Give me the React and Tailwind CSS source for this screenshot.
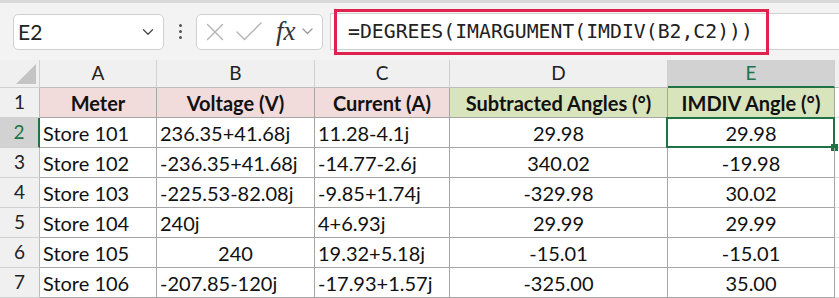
import { ChevronDown } from 'lucide-react'

const cols = ['A', 'B', 'C', 'D', 'E']
const widths = ['w-[117px]', 'w-[158px]', 'w-[135px]', 'w-[218px]', 'w-[167px]']

const rows = [
  ['Store 101', '236.35+41.68j', '11.28-4.1j', '29.98', '29.98'],
  ['Store 102', '-236.35+41.68j', '-14.77-2.6j', '340.02', '-19.98'],
  ['Store 103', '-225.53-82.08j', '-9.85+1.74j', '-329.98', '30.02'],
  ['Store 104', '240j', '4+6.93j', '29.99', '29.99'],
  ['Store 105', '240', '19.32+5.18j', '-15.01', '-15.01'],
  ['Store 106', '-207.85-120j', '-17.93+1.57j', '-325.00', '35.00'],
]

const headers = [
  ['Meter', 'bg-[#f2dcdb]'],
  ['Voltage (V)', 'bg-[#f2dcdb]'],
  ['Current (A)', 'bg-[#f2dcdb]'],
  ['Subtracted Angles (°)', 'bg-[#d8e4bc]'],
  ['IMDIV Angle (°)', 'bg-[#d8e4bc]'],
]

const cellFont = "font-['Lato',sans-serif] text-[20px] text-[#111]"

export default function App() {
  return (
    <div className="h-[298px] w-[839px] overflow-hidden bg-white">
      <FormulaBar />
      <div className="flex h-[28px] bg-[#f0f0f0] font-['Lato',sans-serif] text-[19px] text-[#222]">
        <div className="relative w-[40px] shrink-0 border-r border-b border-[#d0d0d0]">
          <svg className="absolute right-[3px] bottom-[3px]" width="20" height="20" viewBox="0 0 20 20">
            <polygon points="20,0 20,20 0,20" fill="#c4c4c4" />
          </svg>
        </div>
        {cols.map((c, i) => (
          <div
            key={c}
            className={`${widths[i]} flex shrink-0 items-center justify-center border-r border-[#d0d0d0] ${c === 'E' ? 'border-b-2 border-b-[#217346] bg-[#d2d2d2] text-[#217346]' : 'border-b border-b-[#bdbdbd]'}`}
          >
            {c}
          </div>
        ))}
        <div className="flex-1 border-b border-[#bdbdbd]" />
      </div>

      <div className="flex h-[30px]">
        <RowHead n={1} />
        {headers.map(([t, bg], i) => (
          <div key={t} className={`${widths[i]} ${bg} ${cellFont} flex shrink-0 items-center justify-center border-r border-b border-[#a6a6a6] font-bold`}>
            {t}
          </div>
        ))}
        <div className="flex-1 border-b border-[#e1e1e1]" />
      </div>

      {rows.map((r, ri) => (
        <div key={ri} className="flex h-[30px]">
          <RowHead n={ri + 2} active={ri === 0} />
          {r.map((v, ci) => {
            const center = ci >= 3 || v === '240'
            const selected = ri === 0 && ci === 4
            return (
              <div
                key={ci}
                className={`${widths[ci]} ${cellFont} relative flex shrink-0 items-center border-r border-b border-[#a6a6a6] ${center ? 'justify-center' : 'pl-[3px]'}`}
              >
                {v}
                {selected ? (
                  <>
                    <div className="absolute -top-[1px] -left-[2px] -right-[1px] -bottom-[1px] border-2 border-[#217346]" />
                    <div className="absolute -right-[4px] -bottom-[4px] h-[7px] w-[7px] bg-[#217346]" />
                  </>
                ) : null}
              </div>
            )
          })}
          <div className="flex-1 border-b border-[#e1e1e1]" />
        </div>
      ))}
    </div>
  )
}

function RowHead({ n, active }) {
  return (
    <div
      className={`flex w-[40px] shrink-0 items-center justify-center border-b border-[#d0d0d0] font-['Lato',sans-serif] text-[19px] ${active ? 'border-r-2 border-r-[#217346] bg-[#d2d2d2] text-[#217346]' : 'border-r border-r-[#bdbdbd] bg-[#f0f0f0] text-[#222]'}`}
    >
      {n}
    </div>
  )
}

function FormulaBar() {
  return (
    <div className="flex h-[60px] items-center border-t-[3px] border-[#d9d9d9] bg-[#f3f3f3] pl-[13px]">
      <div className="flex h-[36px] w-[151px] items-center justify-between rounded-[5px] border border-[#d0d0d0] bg-white pr-[6px] pl-[4px]">
        <span className="font-['Lato',sans-serif] text-[21px] text-[#222]">E2</span>
        <ChevronDown className="h-[18px] w-[18px] text-[#444]" strokeWidth={1.6} />
      </div>
      <div className="mr-[14px] ml-[15px] flex flex-col gap-[3px]">
        <span className="h-[3px] w-[3px] rounded-full bg-[#555]" />
        <span className="h-[3px] w-[3px] rounded-full bg-[#555]" />
        <span className="h-[3px] w-[3px] rounded-full bg-[#555]" />
      </div>
      <div className="flex h-[36px] w-[127px] items-center rounded-[5px] border border-[#d0d0d0] bg-white pl-[9px]">
        <svg width="18" height="18" viewBox="0 0 18 18" fill="none" stroke="#b3b3b3" strokeWidth="1.4" strokeLinecap="round">
          <path d="M1.5 1.5 16.5 16.5M16.5 1.5 1.5 16.5" />
        </svg>
        <svg className="ml-[12px]" width="26" height="19" viewBox="0 0 26 19" fill="none" stroke="#b3b3b3" strokeWidth="1.4" strokeLinecap="round" strokeLinejoin="round">
          <path d="M1 10 8.5 17.5 25 1" />
        </svg>
        <span className="ml-[14px] font-['Liberation_Serif',serif] text-[27px] leading-none italic text-[#333]">fx</span>
        <svg className="ml-[6px]" width="11" height="7" viewBox="0 0 11 7" fill="none" stroke="#999" strokeWidth="1.3" strokeLinecap="round" strokeLinejoin="round">
          <path d="M1 1 5.5 5.5 10 1" />
        </svg>
      </div>
      <div className="ml-[7px] flex h-[37px] flex-1 items-center border-y border-l border-[#d0d0d0] bg-white">
        <div className="ml-[3px] flex h-[46px] w-[435px] items-center border-[3px] border-[#e0234e] pl-[11px] font-['DejaVu_Sans_Mono',monospace] text-[19.8px] text-[#222]">
          =DEGREES(IMARGUMENT(IMDIV(B2,C2)))
        </div>
      </div>
    </div>
  )
}
